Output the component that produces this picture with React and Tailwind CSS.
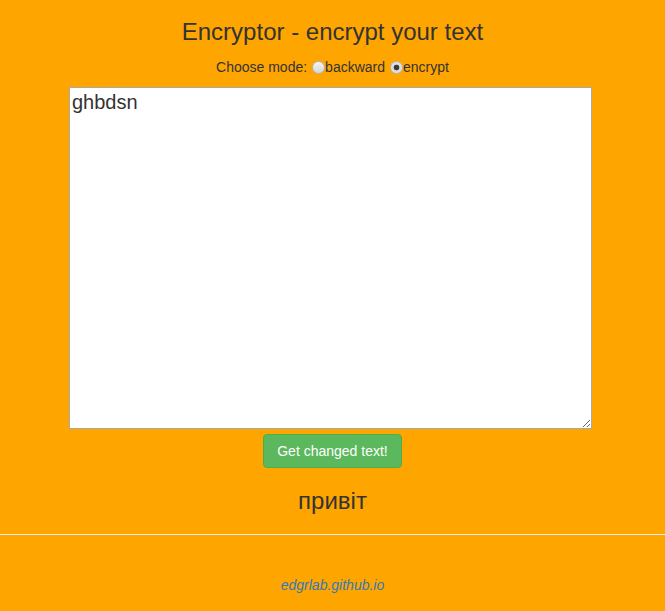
import React, { useState } from "react";

const radioClass =
    "appearance-none m-0 w-[13px] h-[13px] rounded-full border border-[#b5b5b5] bg-[linear-gradient(#f4f4f4,#d6d6d6)] checked:bg-[radial-gradient(circle,#3a3a3a_0,#3a3a3a_2.5px,#dcdcdc_3.2px,#e6e6e6_100%)]";

export default function App() {
    const [mode, setMode] = useState("encrypt");
    const [text, setText] = useState("ghbdsn");

    return (
        <div
            className="min-h-[611px] bg-[#ffa500] text-[#333] text-[14px]"
            style={{ fontFamily: '"Liberation Sans", Arial, sans-serif' }}
        >
            <div className="flex flex-col items-center">
                <h1 className="mt-[19px] text-[24px] leading-[26px]">
                    Encryptor - encrypt your text
                </h1>
                <div className="mt-[12px] h-[20px] flex items-center leading-[20px]">
                    <span className="mr-[5px]">Choose mode:</span>
                    <input
                        type="radio"
                        name="mode"
                        className={radioClass}
                        checked={mode === "backward"}
                        onChange={() => setMode("backward")}
                    />
                    <span>backward</span>
                    <input
                        type="radio"
                        name="mode"
                        className={"ml-[5px] " + radioClass}
                        checked={mode === "encrypt"}
                        onChange={() => setMode("encrypt")}
                    />
                    <span>encrypt</span>
                </div>
            </div>

            <div className="mt-[10px] pl-[69px]">
                <textarea
                    value={text}
                    onChange={(e) => setText(e.target.value)}
                    className="block w-[523px] h-[342px] bg-white border border-[#a9a9a9] px-[2px] py-[2px] text-[20px] leading-[24px] text-[#333] outline-none"
                    style={{ fontFamily: '"Liberation Sans", Arial, sans-serif' }}
                />
            </div>

            <div className="flex flex-col items-center">
                <button className="mt-[5px] h-[34px] px-[13px] rounded-[4px] bg-[#5cb85c] border border-[#4cae4c] text-white text-[14px]">
                    Get changed text!
                </button>
                <div className="mt-[20px] text-[24px] leading-[26px]">привіт</div>
            </div>

            <hr className="mt-[20px] border-0 border-t border-[#eee]" />

            <div className="mt-[40px] text-center">
                <a href="#" className="italic text-[#337ab7] text-[14px]">
                    edgrlab.github.io
                </a>
            </div>
        </div>
    );
}
